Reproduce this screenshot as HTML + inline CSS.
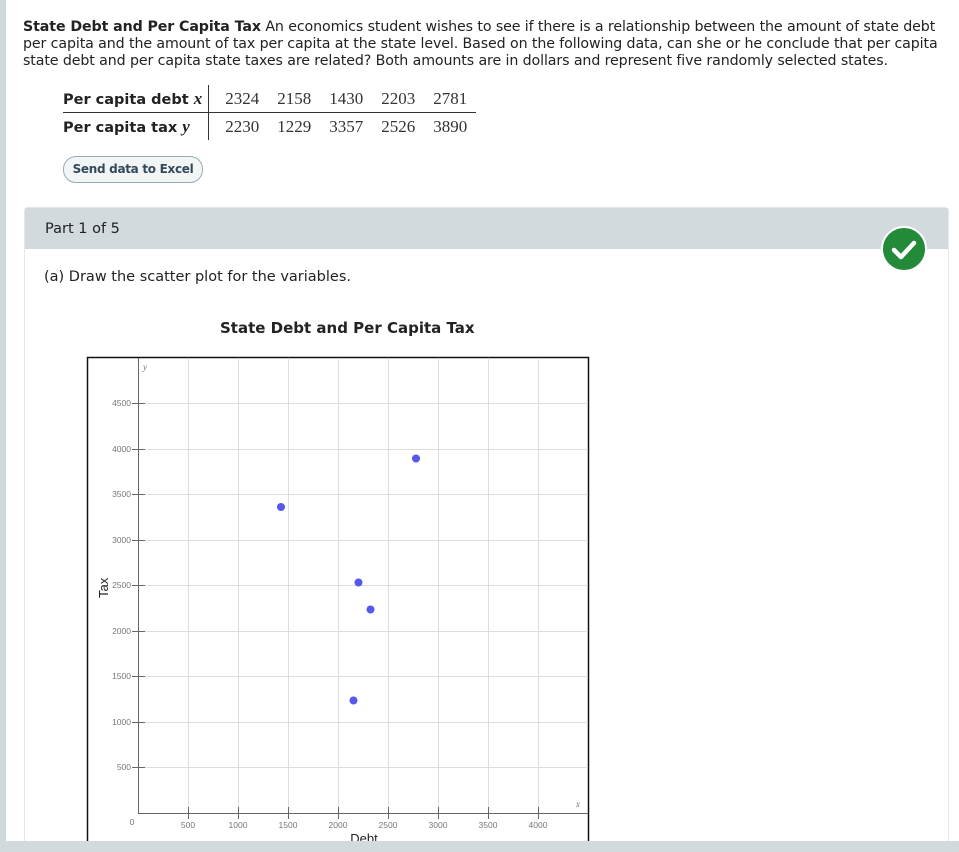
<!DOCTYPE html>
<html><head><meta charset="utf-8"><style>
body{margin:0;width:959px;height:852px;background:#fff;position:relative;overflow:hidden;font-family:"DejaVu Sans","Liberation Sans",sans-serif;color:#222}
.side{position:absolute;left:0;top:0;width:6px;height:852px;background:#cfd8dd}
.bot{position:absolute;left:0;top:841px;width:959px;height:11px;background:#d3dadd}
.intro{position:absolute;left:23px;top:19px;width:925px;font-size:14.2px;line-height:17px;letter-spacing:-0.1px}
table{position:absolute;left:63px;top:85px;border-collapse:collapse;font-size:16px}
td{padding:2px 0;height:23px}
td.h{font-weight:bold;font-size:14.5px;padding-right:6px;border-right:1px solid #333}
td.n{font-family:"Liberation Serif",serif;font-size:17px;padding:0 9px 0 9px;color:#333}
tr.r1 td{border-bottom:1px solid #333}
.btn{position:absolute;left:63px;top:156px;width:138px;height:25px;border:1px solid #9aabb3;border-radius:13px;background:#f2f5f6;font-size:12px;font-weight:bold;color:#33495a;text-align:center;line-height:25px;letter-spacing:-0.3px}
.panel{position:absolute;left:24px;top:207px;width:923px;height:640px;border:1px solid #e3e7e9;border-radius:4px}
.ph{height:41px;background:#d2dadd;font-size:14.5px;line-height:43px;padding-left:20px}
.q{position:absolute;left:44px;top:269px;font-size:14.5px}
.chk{position:absolute;left:881px;top:226px;width:42px;height:42px;border-radius:50%;background:#238a3a;border:2px solid #fff}
</style></head><body>
<div class="side"></div>
<div class="intro"><b>State Debt and Per Capita Tax</b> An economics student wishes to see if there is a relationship between the amount of state debt per capita and the amount of tax per capita at the state level. Based on the following data, can she or he conclude that per capita state debt and per capita state taxes are related? Both amounts are in dollars and represent five randomly selected states.</div>
<table>
<tr class="r1"><td class="h">Per capita debt <i style="font-family:'Liberation Serif',serif;font-size:17px">x</i></td><td class="n" style="padding-left:16px">2324</td><td class="n">2158</td><td class="n">1430</td><td class="n">2203</td><td class="n">2781</td></tr>
<tr><td class="h">Per capita tax <i style="font-family:'Liberation Serif',serif;font-size:17px">y</i></td><td class="n" style="padding-left:16px">2230</td><td class="n">1229</td><td class="n">3357</td><td class="n">2526</td><td class="n">3890</td></tr>
</table>
<div class="btn">Send data to Excel</div>
<div class="panel"><div class="ph">Part 1 of 5</div></div>
<div class="chk"><svg width="42" height="42" viewBox="0 0 42 42"><path d="M11 22 L18 29 L31 15" stroke="#fff" stroke-width="4.5" fill="none" stroke-linecap="round" stroke-linejoin="round"/></svg></div>
<div class="q">(a) Draw the scatter plot for the variables.</div>
<div style="position:absolute;left:220px;top:319px;font-size:15px;font-weight:bold;color:#222">State Debt and Per Capita Tax</div>
<svg style="position:absolute;left:0;top:0" width="959" height="852">
<rect x="87.5" y="357.5" width="501" height="500" fill="none" stroke="#111" stroke-width="1.5"/>
<g stroke="#ddd" stroke-width="1">
<line x1="188.5" y1="358" x2="188.5" y2="813"/><line x1="238.5" y1="358" x2="238.5" y2="813"/><line x1="288.5" y1="358" x2="288.5" y2="813"/><line x1="338.5" y1="358" x2="338.5" y2="813"/><line x1="388.5" y1="358" x2="388.5" y2="813"/><line x1="438.5" y1="358" x2="438.5" y2="813"/><line x1="488.5" y1="358" x2="488.5" y2="813"/><line x1="538.5" y1="358" x2="538.5" y2="813"/>
<line x1="138" y1="403.5" x2="588" y2="403.5"/><line x1="138" y1="449.5" x2="588" y2="449.5"/><line x1="138" y1="494.5" x2="588" y2="494.5"/><line x1="138" y1="540.5" x2="588" y2="540.5"/><line x1="138" y1="585.5" x2="588" y2="585.5"/><line x1="138" y1="631.5" x2="588" y2="631.5"/><line x1="138" y1="676.5" x2="588" y2="676.5"/><line x1="138" y1="722.5" x2="588" y2="722.5"/><line x1="138" y1="767.5" x2="588" y2="767.5"/>
</g>
<g stroke="#666" stroke-width="1">
<line x1="138.5" y1="358" x2="138.5" y2="813"/><line x1="138" y1="813.5" x2="588" y2="813.5"/>
<line x1="132" y1="403.5" x2="145" y2="403.5"/><line x1="132" y1="449.5" x2="145" y2="449.5"/><line x1="132" y1="494.5" x2="145" y2="494.5"/><line x1="132" y1="540.5" x2="145" y2="540.5"/><line x1="132" y1="585.5" x2="145" y2="585.5"/><line x1="132" y1="631.5" x2="145" y2="631.5"/><line x1="132" y1="676.5" x2="145" y2="676.5"/><line x1="132" y1="722.5" x2="145" y2="722.5"/><line x1="132" y1="767.5" x2="145" y2="767.5"/>
<line x1="188.5" y1="807" x2="188.5" y2="819"/><line x1="238.5" y1="807" x2="238.5" y2="819"/><line x1="288.5" y1="807" x2="288.5" y2="819"/><line x1="338.5" y1="807" x2="338.5" y2="819"/><line x1="388.5" y1="807" x2="388.5" y2="819"/><line x1="438.5" y1="807" x2="438.5" y2="819"/><line x1="488.5" y1="807" x2="488.5" y2="819"/><line x1="538.5" y1="807" x2="538.5" y2="819"/>
</g>
<g font-family="Liberation Sans,sans-serif" font-size="8.5" fill="#777" text-anchor="end">
<text x="131" y="406">4500</text><text x="131" y="452">4000</text><text x="131" y="497">3500</text><text x="131" y="543">3000</text><text x="131" y="588">2500</text><text x="131" y="634">2000</text><text x="131" y="679">1500</text><text x="131" y="725">1000</text><text x="131" y="770">500</text>
</g>
<g font-family="Liberation Sans,sans-serif" font-size="8.5" fill="#777" text-anchor="middle">
<text x="132" y="825">0</text><text x="188" y="828">500</text><text x="238" y="828">1000</text><text x="288" y="828">1500</text><text x="338" y="828">2000</text><text x="388" y="828">2500</text><text x="438" y="828">3000</text><text x="488" y="828">3500</text><text x="538" y="828">4000</text>
</g>
<text x="143" y="370" font-family="Liberation Serif,serif" font-style="italic" font-size="9" fill="#777">y</text>
<text x="576" y="807" font-family="Liberation Serif,serif" font-style="italic" font-size="9" fill="#777">x</text>
<text transform="translate(108,598) rotate(-90)" font-family="Liberation Sans,sans-serif" font-size="13" fill="#222">Tax</text>
<text x="364" y="843" text-anchor="middle" font-family="Liberation Sans,sans-serif" font-size="13" fill="#222">Debt</text>
<g fill="#5558ee">
<circle cx="370.5" cy="609.5" r="4"/><circle cx="353.5" cy="700.5" r="4"/><circle cx="281" cy="507" r="4"/><circle cx="358.5" cy="582.5" r="4"/><circle cx="416" cy="458.5" r="4"/>
</g>
</svg>
<div class="bot"></div>
</body></html>
